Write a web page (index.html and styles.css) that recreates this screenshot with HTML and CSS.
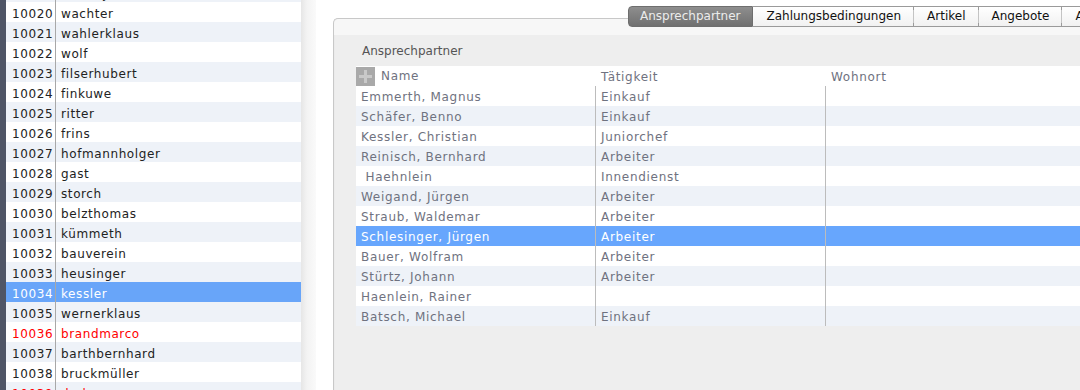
FILE: index.html
```html
<!DOCTYPE html>
<html lang="de">
<head>
    <meta charset="UTF-8">
    <title>Kunden - Ansprechpartner</title>
    <link rel="stylesheet" href="styles.css">
</head>
<body>
    <div class="app">
        <div class="side-strip"></div>

        <div class="customer-list">
            <div class="rows">
                <div class="row alt"><span class="num">10019</span><span class="name">dummy</span></div>
                <div class="row"><span class="num">10020</span><span class="name">wachter</span></div>
                <div class="row alt"><span class="num">10021</span><span class="name">wahlerklaus</span></div>
                <div class="row"><span class="num">10022</span><span class="name">wolf</span></div>
                <div class="row alt"><span class="num">10023</span><span class="name">filserhubert</span></div>
                <div class="row"><span class="num">10024</span><span class="name">finkuwe</span></div>
                <div class="row alt"><span class="num">10025</span><span class="name">ritter</span></div>
                <div class="row"><span class="num">10026</span><span class="name">frins</span></div>
                <div class="row alt"><span class="num">10027</span><span class="name">hofmannholger</span></div>
                <div class="row"><span class="num">10028</span><span class="name">gast</span></div>
                <div class="row alt"><span class="num">10029</span><span class="name">storch</span></div>
                <div class="row"><span class="num">10030</span><span class="name">belzthomas</span></div>
                <div class="row alt"><span class="num">10031</span><span class="name">kümmeth</span></div>
                <div class="row"><span class="num">10032</span><span class="name">bauverein</span></div>
                <div class="row alt"><span class="num">10033</span><span class="name">heusinger</span></div>
                <div class="row selected"><span class="num">10034</span><span class="name">kessler</span></div>
                <div class="row alt"><span class="num">10035</span><span class="name">wernerklaus</span></div>
                <div class="row inactive"><span class="num">10036</span><span class="name">brandmarco</span></div>
                <div class="row alt"><span class="num">10037</span><span class="name">barthbernhard</span></div>
                <div class="row"><span class="num">10038</span><span class="name">bruckmüller</span></div>
                <div class="row alt inactive"><span class="num">10039</span><span class="name">dreher</span></div>
            </div>
        </div>
        <div class="list-scroll"></div>

        <div class="detail">
            <div class="tabs">
                <span class="tab active">Ansprechpartner</span>
                <span class="tab">Zahlungsbedingungen</span>
                <span class="tab">Artikel</span>
                <span class="tab">Angebote</span>
                <span class="tab">Auftr&auml;ge</span>
            </div>

            <div class="panel">
                <div class="panel-top"></div>
                <div class="panel-body">
                    <div class="section-label">Ansprechpartner</div>

                    <div class="contacts">
                        <div class="contacts-head">
                            <div class="cell col-name">
                                <span class="add-btn"></span>
                                <span>Name</span>
                            </div>
                            <div class="cell col-job">Tätigkeit</div>
                            <div class="cell col-city">Wohnort</div>
                        </div>

                        <div class="contact-row"><div class="cell col-name">Emmerth, Magnus</div><div class="cell col-job">Einkauf</div><div class="cell col-city"></div></div>
                        <div class="contact-row alt"><div class="cell col-name">Schäfer, Benno</div><div class="cell col-job">Einkauf</div><div class="cell col-city"></div></div>
                        <div class="contact-row"><div class="cell col-name">Kessler, Christian</div><div class="cell col-job">Juniorchef</div><div class="cell col-city"></div></div>
                        <div class="contact-row alt"><div class="cell col-name">Reinisch, Bernhard</div><div class="cell col-job">Arbeiter</div><div class="cell col-city"></div></div>
                        <div class="contact-row"><div class="cell col-name">&nbsp;Haehnlein</div><div class="cell col-job">Innendienst</div><div class="cell col-city"></div></div>
                        <div class="contact-row alt"><div class="cell col-name">Weigand, Jürgen</div><div class="cell col-job">Arbeiter</div><div class="cell col-city"></div></div>
                        <div class="contact-row"><div class="cell col-name">Straub, Waldemar</div><div class="cell col-job">Arbeiter</div><div class="cell col-city"></div></div>
                        <div class="contact-row selected"><div class="cell col-name">Schlesinger, Jürgen</div><div class="cell col-job">Arbeiter</div><div class="cell col-city"></div></div>
                        <div class="contact-row"><div class="cell col-name">Bauer, Wolfram</div><div class="cell col-job">Arbeiter</div><div class="cell col-city"></div></div>
                        <div class="contact-row alt"><div class="cell col-name">Stürtz, Johann</div><div class="cell col-job">Arbeiter</div><div class="cell col-city"></div></div>
                        <div class="contact-row"><div class="cell col-name">Haenlein, Rainer</div><div class="cell col-job"></div><div class="cell col-city"></div></div>
                        <div class="contact-row alt"><div class="cell col-name">Batsch, Michael</div><div class="cell col-job">Einkauf</div><div class="cell col-city"></div></div>
                    </div>
                </div>
            </div>
        </div>
    </div>
</body>
</html>
```

FILE: styles.css
```css
html, body {
    margin: 0;
    padding: 0;
    height: 100%;
    overflow: hidden;
}
body {
    font-family: "DejaVu Sans", Verdana, sans-serif;
    font-size: 12px;
    background-color: #fff;
    color: #222;
}
.app {
    display: flex;
    height: 390px;
}
.side-strip {
    width: 6px;
    flex: none;
    background-color: #4f5566;
}

/* customer list on the left */
.customer-list {
    width: 295px;
    flex: none;
    overflow: hidden;
    letter-spacing: 0.6px;
}
.rows {
    margin-top: -18px;
}
.row {
    display: flex;
    height: 20px;
    line-height: 24px;
    overflow: hidden;
    background-color: #fff;
}
.row.alt {
    background-color: #eef2f8;
}
.row .num {
    width: 43px;
    padding-left: 6px;
    border-right: 1px solid #a8a8a8;
    flex: none;
}
.row .name {
    padding-left: 5px;
}
.row.selected {
    background-color: #68a5f9;
    color: #fff;
}
.row.inactive {
    color: #f00;
}
.list-scroll {
    width: 15px;
    flex: none;
    background: linear-gradient(to right, #e6e6e6, #f3f3f3 40%, #fafafa);
}

/* detail area */
.detail {
    flex: 1;
    padding-left: 17px;
    overflow: hidden;
    display: flex;
    flex-direction: column;
}
.tabs {
    display: flex;
    margin-top: 6px;
    margin-left: 295px;
    height: 21px;
    position: relative;
    z-index: 1;
    white-space: nowrap;
}
.tab {
    display: block;
    height: 19px;
    line-height: 19px;
    padding: 0 12px 0 13px;
    border: 1px solid #9a9a9a;
    border-left: none;
    background: linear-gradient(#fff, #f1f1f1);
    color: #111;
    font-size: 12px;
    position: relative;
}
.tab + .tab::before {
    content: "";
    position: absolute;
    left: -1px;
    top: 3px;
    bottom: 3px;
    border-left: 1px solid #c4c4c4;
}
.tab.active + .tab::before {
    display: none;
}
.tab.active {
    padding: 0 12px 0 11px;
    border-left: 1px solid #7a7a7a;
    border-color: #6e6e6e;
    border-radius: 4px 0 0 4px;
    background: linear-gradient(#8e8e8e, #707070);
    color: #ececec;
}

.panel {
    margin-top: -9px;
    width: 820px;
    flex: 1;
    border: 1px solid #c8c8c8;
    border-right: none;
    border-bottom: none;
    border-radius: 5px 0 0 0;
    box-shadow: inset 1px 1px 0 #ebebeb;
    background-color: #eeeeee;
    display: flex;
    flex-direction: column;
}
.panel-top {
    height: 16px;
    background-color: #f7f7f7;
    border-radius: 5px 0 0 0;
}
.panel-body {
    padding-left: 22px;
}
.section-label {
    height: 31px;
    line-height: 32px;
    padding-left: 6px;
    color: #555;
}

/* contacts table */
.contacts {
    color: #6f7280;
    letter-spacing: 0.7px;
}
.contacts-head,
.contact-row {
    display: flex;
    height: 20px;
    line-height: 22px;
    background-color: #fff;
}
.contact-row.alt {
    background-color: #eef2f8;
}
.contact-row.selected {
    background-color: #67a6fd;
    color: #fff;
}
.cell {
    flex: none;
    height: 20px;
    white-space: pre;
}
.col-name {
    width: 234px;
    padding-left: 5px;
}
.col-job {
    width: 224px;
    padding-left: 5px;
}
.col-city {
    width: 300px;
    padding-left: 5px;
}
.contact-row .col-job,
.contact-row .col-city {
    border-left: 1px solid #bcbcbc;
}
.contacts-head .col-name {
    display: flex;
    align-items: center;
    padding-left: 0;
    width: 239px;
    gap: 6px;
}
.contacts-head .col-job,
.contacts-head .col-city {
    padding-left: 6px;
}
.add-btn {
    width: 19px;
    height: 19px;
    flex: none;
    background-color: #a9a9a9;
    position: relative;
}
.add-btn::before,
.add-btn::after {
    content: "";
    position: absolute;
    background-color: #c9c9c9;
}
.add-btn::before {
    left: 8px;
    top: 3px;
    width: 3px;
    height: 13px;
}
.add-btn::after {
    left: 3px;
    top: 8px;
    width: 13px;
    height: 3px;
}
```
